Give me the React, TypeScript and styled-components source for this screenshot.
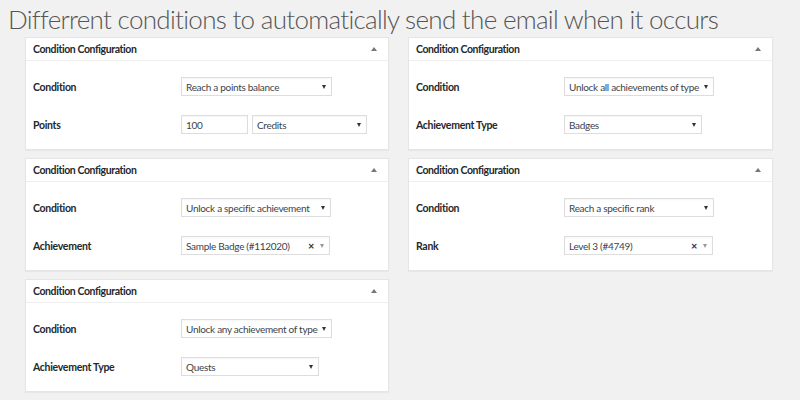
import React from "react";
import styled, { createGlobalStyle } from "styled-components";

const GlobalStyle = createGlobalStyle`
  html, body {
    margin: 0;
    padding: 0;
    background: #f1f1f1;
  }
  body {
    font-family: Lato, "Noto Sans", sans-serif;
  }
`;

const Page = styled.div`
  width: 800px;
  height: 400px;
  padding: 6px 0 0 8px;
  box-sizing: border-box;
  overflow: hidden;
`;

const Title = styled.h1`
  margin: 0 0 5px 0;
  font-family: Lato, sans-serif;
  font-weight: 300;
  font-size: 26px;
  line-height: 26px;
  letter-spacing: -0.7px;
  color: #555;
  white-space: nowrap;
`;

const Columns = styled.div`
  display: grid;
  grid-template-columns: 364px 365px;
  column-gap: 19px;
  padding-left: 17px;
  align-items: start;
`;

const Column = styled.div`
  display: flex;
  flex-direction: column;
  gap: 8px;
`;

const Panel = styled.div`
  background: #fff;
  border: 1px solid #e5e5e5;
  box-shadow: 0 1px 1px rgba(0, 0, 0, 0.04);
  height: 113px;
  box-sizing: border-box;
`;

const PanelHeader = styled.div`
  display: flex;
  align-items: center;
  justify-content: space-between;
  height: 22px;
  padding: 0 11px 0 7px;
  border-bottom: 1px solid #eee;
`;

const PanelTitle = styled.span`
  font-size: 10.5px;
  font-weight: 700;
  letter-spacing: -0.4px;
  color: #23282d;
`;

const Toggle = styled.span`
  width: 0;
  height: 0;
  border-left: 3px solid transparent;
  border-right: 3px solid transparent;
  border-bottom: 4px solid #72777c;
`;

const PanelBody = styled.div`
  display: flex;
  flex-direction: column;
  gap: 19px;
  padding: 16px 7px 0 7px;
`;

const FieldRow = styled.div`
  display: grid;
  grid-template-columns: 148px auto;
  align-items: center;
`;

const Label = styled.span`
  font-size: 10.5px;
  font-weight: 700;
  letter-spacing: -0.3px;
  color: #23282d;
`;

const Controls = styled.div`
  display: flex;
  gap: 4px;
`;

const Box = styled.div<{ $width: number }>`
  display: flex;
  align-items: center;
  width: ${(p) => p.$width}px;
  height: 19px;
  box-sizing: border-box;
  border: 1px solid #ddd;
  box-shadow: inset 0 1px 2px rgba(0, 0, 0, 0.04);
  background: #fff;
  padding: 0 5px 0 4px;
  font-size: 10px;
  letter-spacing: -0.3px;
  color: #3c434a;
`;

const Value = styled.span`
  flex: 1;
  white-space: nowrap;
  overflow: hidden;
`;

const Caret = styled.span`
  flex: none;
  width: 0;
  height: 0;
  border-left: 2.5px solid transparent;
  border-right: 2.5px solid transparent;
  border-top: 4px solid #333;
  margin-left: 2px;
`;

const Clear = styled.span`
  font-size: 11px;
  font-weight: 700;
  color: #333;
  margin-right: 6px;
  line-height: 1;
`;

const SoftCaret = styled(Caret)`
  border-top-color: #999;
  margin-left: 0;
`;

function Select({ value, width }: { value: string; width: number }) {
  return (
    <Box $width={width}>
      <Value>{value}</Value>
      <Caret />
    </Box>
  );
}

function Select2({ value, width }: { value: string; width: number }) {
  return (
    <Box $width={width}>
      <Value>{value}</Value>
      <Clear>×</Clear>
      <SoftCaret />
    </Box>
  );
}

function ConditionPanel({ children }: { children: React.ReactNode }) {
  return (
    <Panel>
      <PanelHeader>
        <PanelTitle>Condition Configuration</PanelTitle>
        <Toggle />
      </PanelHeader>
      <PanelBody>{children}</PanelBody>
    </Panel>
  );
}

export default function App() {
  return (
    <Page>
      <GlobalStyle />
      <Title>Differrent conditions to automatically send the email when it occurs</Title>
      <Columns>
        <Column>
          <ConditionPanel>
            <FieldRow>
              <Label>Condition</Label>
              <Select value="Reach a points balance" width={151} />
            </FieldRow>
            <FieldRow>
              <Label>Points</Label>
              <Controls>
                <Box $width={67}>
                  <Value>100</Value>
                </Box>
                <Select value="Credits" width={115} />
              </Controls>
            </FieldRow>
          </ConditionPanel>
          <ConditionPanel>
            <FieldRow>
              <Label>Condition</Label>
              <Select value="Unlock a specific achievement" width={150} />
            </FieldRow>
            <FieldRow>
              <Label>Achievement</Label>
              <Select2 value="Sample Badge (#112020)" width={149} />
            </FieldRow>
          </ConditionPanel>
          <ConditionPanel>
            <FieldRow>
              <Label>Condition</Label>
              <Select value="Unlock any achievement of type" width={151} />
            </FieldRow>
            <FieldRow>
              <Label>Achievement Type</Label>
              <Select value="Quests" width={138} />
            </FieldRow>
          </ConditionPanel>
        </Column>
        <Column>
          <ConditionPanel>
            <FieldRow>
              <Label>Condition</Label>
              <Select value="Unlock all achievements of type" width={150} />
            </FieldRow>
            <FieldRow>
              <Label>Achievement Type</Label>
              <Select value="Badges" width={138} />
            </FieldRow>
          </ConditionPanel>
          <ConditionPanel>
            <FieldRow>
              <Label>Condition</Label>
              <Select value="Reach a specific rank" width={150} />
            </FieldRow>
            <FieldRow>
              <Label>Rank</Label>
              <Select2 value="Level 3 (#4749)" width={149} />
            </FieldRow>
          </ConditionPanel>
        </Column>
      </Columns>
    </Page>
  );
}
